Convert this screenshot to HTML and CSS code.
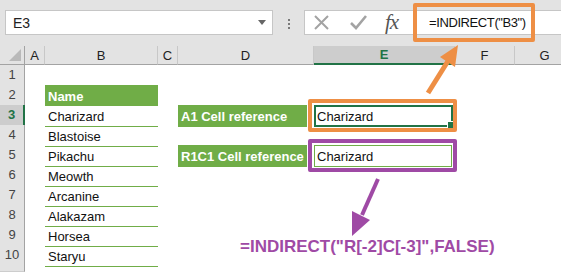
FILE: index.html
```html
<!DOCTYPE html>
<html lang="en">
<head>
  <meta charset="UTF-8" />
  <title>INDIRECT example</title>
  <link rel="stylesheet" href="styles.css">
</head>
<body>
  <div class="toolbar">
    <div class="name-box">E3<span class="caret"></span></div>
    <div class="grip"><span class="dots"></span></div>
    <div class="formula-bar">
      <div class="fx-icons">
        <svg width="17" height="17" viewBox="0 0 17 17"><path d="M2 2 L15 15 M15 2 L2 15" stroke="#a3a3a3" stroke-width="2" fill="none"/></svg>
        <svg width="17" height="17" viewBox="0 0 17 17"><path d="M1 9 L6 14 L16 2" stroke="#a3a3a3" stroke-width="2.6" fill="none"/></svg>
        <span class="fx">fx</span>
      </div>
      <span class="formula">=INDIRECT("B3")</span>
    </div>
  </div>

  <div class="sheet">
    <div class="row head">
      <div class="hd corner"></div><div class="hd">A</div><div class="hd">B</div><div class="hd">C</div><div class="hd">D</div><div class="hd sel">E</div><div class="hd">F</div><div class="hd">G</div>
    </div>
    <div class="row">
      <div class="rh">1</div><div></div><div></div><div></div><div></div><div></div><div></div><div></div>
    </div>
    <div class="row">
      <div class="rh">2</div><div></div><div class="name-hd">Name</div><div></div><div></div><div></div><div></div><div></div>
    </div>
    <div class="row">
      <div class="rh sel">3</div><div></div><div class="name">Charizard</div><div></div><div class="label">A1 Cell reference</div><div class="value active">Charizard</div><div></div><div></div>
    </div>
    <div class="row">
      <div class="rh">4</div><div></div><div class="name">Blastoise</div><div></div><div></div><div></div><div></div><div></div>
    </div>
    <div class="row">
      <div class="rh">5</div><div></div><div class="name">Pikachu</div><div></div><div class="label">R1C1 Cell reference</div><div class="value boxed">Charizard</div><div></div><div></div>
    </div>
    <div class="row">
      <div class="rh">6</div><div></div><div class="name">Meowth</div><div></div><div></div><div></div><div></div><div></div>
    </div>
    <div class="row">
      <div class="rh">7</div><div></div><div class="name">Arcanine</div><div></div><div></div><div></div><div></div><div></div>
    </div>
    <div class="row">
      <div class="rh">8</div><div></div><div class="name">Alakazam</div><div></div><div></div><div></div><div></div><div></div>
    </div>
    <div class="row">
      <div class="rh">9</div><div></div><div class="name">Horsea</div><div></div><div></div><div></div><div></div><div></div>
    </div>
    <div class="row">
      <div class="rh">10</div><div></div><div class="name">Staryu</div><div></div><div></div><div></div><div></div><div></div>
    </div>
    <div class="row short">
      <div class="rh"></div><div></div><div></div><div></div><div></div><div></div><div></div><div></div>
    </div>
  </div>

  <!-- annotations drawn over the sheet -->
  <div class="hl hl-formula"></div>
  <div class="hl hl-a1"></div>
  <div class="hl hl-r1c1"></div>
  <svg class="arrows" width="561" height="272" viewBox="0 0 561 272">
    <line x1="428" y1="93" x2="448" y2="61" stroke="#ee8f45" stroke-width="5"/>
    <polygon points="458,45 440,57 455,67" fill="#ee8f45"/>
    <line x1="378" y1="179" x2="362" y2="215" stroke="#9f4aa5" stroke-width="4"/>
    <polygon points="352,236 352,211 370,220" fill="#9f4aa5"/>
  </svg>
  <div class="note">=INDIRECT("R[-2]C[-3]",FALSE)</div>
</body>
</html>
```

FILE: styles.css
```css
:root {
  --bar-gray: #e3e3e3;
  --sel-gray: #cdcdcd;
  --xl-green: #217346;
  --table-green: #70ad47;
  --orange: #ee8f45;
  --purple: #9f4aa5;
}

* {
  box-sizing: border-box;
}

body {
  margin: 0;
  width: 561px;
  height: 272px;
  overflow: hidden;
  position: relative;
  background: #fff;
  font-family: 'Liberation Sans', Arial, sans-serif;
  color: #111;
}

.toolbar {
  display: flex;
  align-items: flex-start;
  height: 46px;
  padding: 10px 0 0 5px;
  background: var(--bar-gray);
}

.name-box {
  width: 268px;
  height: 25px;
  background: #fff;
  border: 1px solid #c6c6c6;
  display: flex;
  align-items: center;
  justify-content: space-between;
  padding: 0 6px 0 7px;
  font-size: 14px;
  color: #222;
}

.caret {
  border-top: 5px solid #666;
  border-left: 4px solid transparent;
  border-right: 4px solid transparent;
}

.grip {
  width: 31px;
  display: flex;
  justify-content: center;
  padding-top: 9px;
}

.dots {
  width: 2px;
  height: 2px;
  background: #7a7a7a;
  box-shadow: 0 4px #7a7a7a, 0 8px #7a7a7a;
}

.formula-bar {
  flex: 1;
  height: 25px;
  background: #fff;
  border: 1px solid #c6c6c6;
  border-right: none;
  display: flex;
  align-items: center;
}

.fx-icons {
  flex: none;
  width: 124px;
  display: flex;
  align-items: center;
  gap: 20px;
  padding-left: 8px;
}

.fx {
  font-family: 'Liberation Serif', serif;
  font-style: italic;
  font-size: 21px;
  color: #555;
  margin-left: -2px;
  letter-spacing: -1px;
}

.formula {
  font-size: 13px;
  letter-spacing: -0.4px;
  color: #111;
  white-space: nowrap;
}

.row {
  display: grid;
  grid-template-columns: 25px 20px 113px 20px 136px 141px 60px 60px;
  height: 20px;
}

.row.head {
  height: 19px;
}

.row.short {
  height: 7px;
}

.hd {
  background: var(--bar-gray);
  border-right: 1px solid #c8c8c8;
  border-bottom: 1px solid #a3a3a3;
  display: flex;
  align-items: center;
  justify-content: center;
  font-size: 13px;
  color: #222;
}

.hd.sel {
  background: var(--sel-gray);
  border-bottom: 2px solid var(--xl-green);
  color: var(--xl-green);
  font-weight: bold;
}

.corner {
  position: relative;
  border-right-color: #a3a3a3;
}

.corner::after {
  content: '';
  position: absolute;
  right: 3px;
  bottom: 3px;
  border-left: 12px solid transparent;
  border-bottom: 12px solid #b9b9b9;
}

.rh {
  background: var(--bar-gray);
  border-right: 1px solid #a3a3a3;
  border-bottom: 1px solid #cdcdcd;
  text-align: center;
  font-size: 13px;
  line-height: 20px;
  color: #444;
}

.rh.sel {
  background: var(--sel-gray);
  border-right: 2px solid var(--xl-green);
  color: var(--xl-green);
  font-weight: bold;
}

.name,
.name-hd,
.label,
.value {
  font-size: 13px;
  line-height: 18px;
  padding: 3px 0 0 3px;
  white-space: nowrap;
}

.name-hd {
  background: var(--table-green);
  color: #fff;
  font-weight: bold;
}

.name {
  border-bottom: 1px solid var(--table-green);
}

.label {
  width: 129px;
  background: var(--table-green);
  color: #fff;
  font-weight: bold;
}

.value.active {
  position: relative;
  height: 22px;
  margin-right: 2px;
  border: 2px solid var(--xl-green);
  padding: 1px 0 0 1px;
}

.value.active::after {
  content: '';
  position: absolute;
  right: -4px;
  bottom: -4px;
  width: 6px;
  height: 6px;
  background: var(--xl-green);
  border: 1px solid #fff;
}

.value.boxed {
  margin-right: 3px;
  border: 1px solid var(--table-green);
  padding: 2px 0 0 2px;
}

.hl {
  position: absolute;
  border: 4px solid var(--orange);
  border-radius: 2px;
}

.hl-formula {
  left: 413px;
  top: 3px;
  width: 122px;
  height: 39px;
}

.hl-a1 {
  left: 308px;
  top: 99px;
  width: 149px;
  height: 33px;
}

.hl-r1c1 {
  left: 308px;
  top: 139px;
  width: 149px;
  height: 33px;
  border-color: var(--purple);
}

.arrows {
  position: absolute;
  top: 0;
  left: 0;
  pointer-events: none;
}

.note {
  position: absolute;
  left: 240px;
  top: 237px;
  font-size: 17px;
  font-weight: bold;
  line-height: 20px;
  color: var(--purple);
  white-space: nowrap;
}
```
